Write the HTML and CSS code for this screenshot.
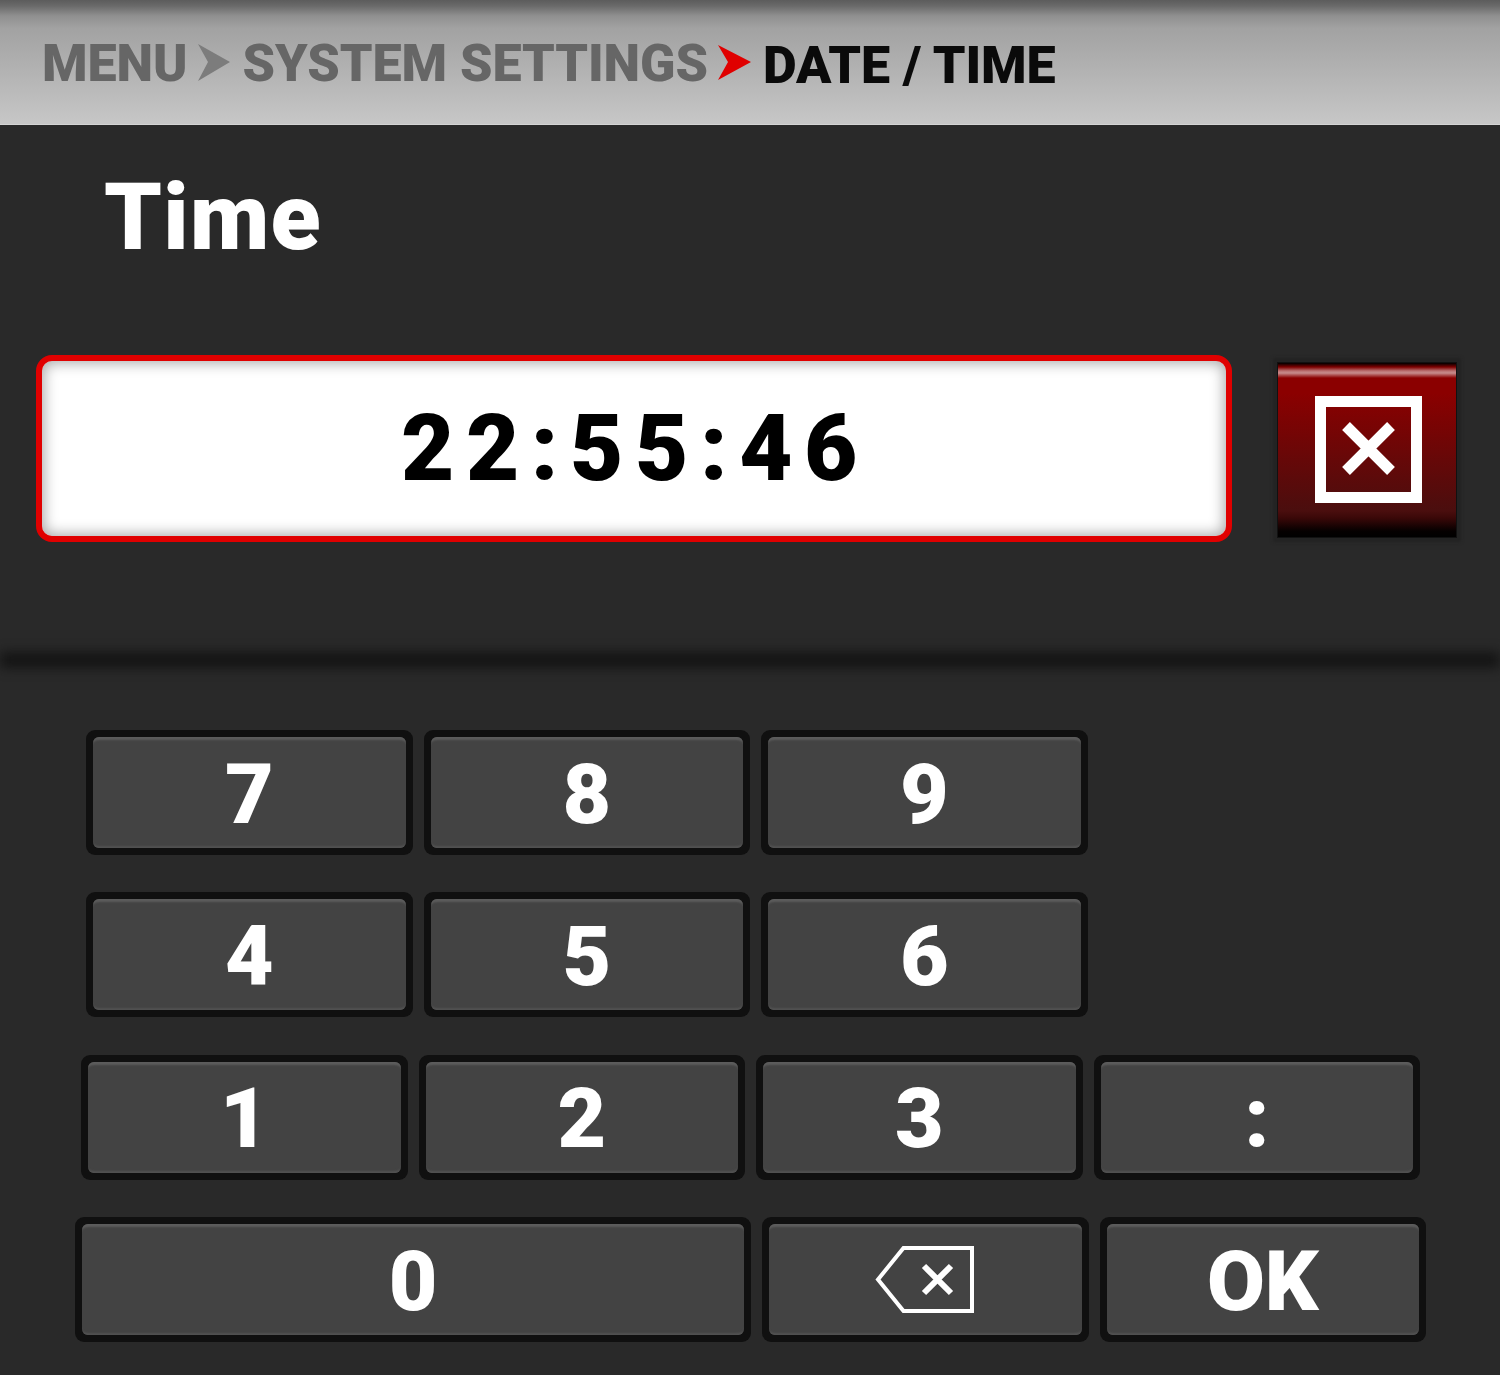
FILE: index.html
```html
<!DOCTYPE html>
<html lang="en">
<head>
<meta charset="utf-8">
<title>Date / Time</title>
<link rel="stylesheet" href="styles.css">
</head>
<body>
<header class="crumbs">
  <span class="crumb">MENU</span>
  <svg class="chev chev-a" width="34" height="40" viewBox="0 0 34 40"><polygon points="1,1 33,19 1,38 11,19" fill="#7c7c7c"/></svg>
  <span class="crumb">SYSTEM SETTINGS</span>
  <svg class="chev chev-b" width="34" height="40" viewBox="0 0 34 40"><polygon points="1,1 34,18 1,36 11,18" fill="#e00000"/></svg>
  <span class="crumb current">DATE / TIME</span>
</header>
<main>
  <h1 class="title">Time</h1>
  <section class="entry">
    <div class="field">22:55:46</div>
    <button class="clear" aria-label="Clear">
      <svg width="107" height="107" viewBox="0 0 107 107"><rect x="5.5" y="5.500" width="96" height="96" fill="none" stroke="#fff" stroke-width="11"/><path d="M31 30 L76 75 M76 30 L31 75" stroke="#fff" stroke-width="11" fill="none"/></svg>
    </button>
  </section>
  <div class="divider"></div>
  <section class="pad">
    <div class="row row-a"><button class="key"><span class="cap">7</span></button><button class="key"><span class="cap">8</span></button><button class="key"><span class="cap">9</span></button></div>
    <div class="row row-a"><button class="key"><span class="cap">4</span></button><button class="key"><span class="cap">5</span></button><button class="key"><span class="cap">6</span></button></div>
    <div class="row row-b"><button class="key"><span class="cap">1</span></button><button class="key"><span class="cap">2</span></button><button class="key"><span class="cap">3</span></button><button class="key"><span class="cap">:</span></button></div>
    <div class="row row-c"><button class="key wide"><span class="cap">0</span></button>
      <button class="key" aria-label="Backspace"><span class="cap">
        <svg width="100" height="68" viewBox="0 0 100 68"><path d="M97 2 H28.500 L3 33.500 L28.500 65 H97 Z" fill="none" stroke="#fff" stroke-width="4"/><path d="M49 20 L76 47 M76 20 L49 47" stroke="#fff" stroke-width="6" fill="none"/></svg>
      </span></button>
      <button class="key"><span class="cap">OK</span></button></div>
  </section>
</main>
</body>
</html>
```
FILE: styles.css
```css
* { box-sizing: border-box; }
html, body { margin: 0; padding: 0; }
body {
  width: 1500px;
  height: 1375px;
  overflow: hidden;
  background: #292929;
  font-family: Roboto, "Liberation Sans", sans-serif;
}
.crumbs {
  height: 125px;
  display: flex;
  align-items: flex-start;
  padding: 31px 0 0 42px;
  background: linear-gradient(#5c5c5c 0, #6a6a6a 6px, #909090 16px, #a2a2a2 28px, #c6c6c6 122px);
  border-bottom: 1px solid #d4d4d4;
}
.crumb {
  font-size: 52px;
  line-height: 66px;
  font-weight: 900;
  letter-spacing: -0.05px;
  color: #666;
  white-space: nowrap;
}
.chev { flex: none; margin-top: 12px; }
.chev-a { margin-left: 9px; margin-right: 12px; }
.chev-b { margin-left: 9px; margin-right: 12px; margin-top: 13px; }
.current { color: #0a0a0a; margin-top: 2px; }

.title {
  margin: 0;
  padding-left: 104px;
  height: 230px;
  padding-top: 39px;
  font-size: 92px;
  line-height: 108px;
  font-weight: 900;
  letter-spacing: 1.3px;
  color: #fff;
}
.entry {
  display: flex;
  align-items: center;
  height: 187px;
  padding-left: 36px;
}
.field {
  width: 1196px;
  height: 187px;
  padding-left: 2px;
  border: 6px solid #e00000;
  border-radius: 16px;
  background: #fff;
  box-shadow: inset 0 0 14px 2px #a8a8a8;
  color: #000;
  text-align: center;
  font-size: 92px;
  line-height: 176px;
  font-weight: 900;
  letter-spacing: 11.6px;
}
.clear {
  width: 178px;
  height: 174px;
  margin: 2px 0 0 46px;
  padding: 0 0 1px 3px;
  border: 0;
  display: flex;
  align-items: center;
  justify-content: center;
  background: linear-gradient(#000 0, #7d0000 4px, #bb7373 8px, #c78c8c 10px, #8b0000 15px, #8b0000 30px, #4a0e0e 148px, #3a0808 155px, #050000 168px, #000 174px);
  box-shadow: 0 0 0 1px #111, 0 0 3px 5px #232323;
}
.divider {
  height: 16px;
  margin: 110px 0 0;
  background: #141414;
  filter: blur(6px);
}
.pad {
  display: flex;
  flex-direction: column;
  gap: 37.4px;
  padding-top: 62px;
}
.row { display: flex; gap: 11px; }
.row-a { padding-left: 86px; }
.row-b { padding-left: 81px; }
.row-c { padding-left: 75px; }
.key {
  width: 326.5px;
  height: 125px;
  padding: 7px;
  display: flex;
  border: 0;
  border-radius: 9px;
  background: #101010;
  color: #fff;
  font-family: Roboto, "Liberation Sans", sans-serif;
  font-size: 84px;
  font-weight: 900;
  line-height: 1;
}
.cap {
  flex: 1;
  display: flex;
  align-items: center;
  justify-content: center;
  padding-top: 4px;
  border-radius: 6px;
  background: #434343;
  box-shadow: inset 0 5px 2px -2px #5c5c5c, inset 0 -4px 2px -2px #525252;
}
.cap svg { margin-top: -4px; }
.wide { width: 676px; }
```
